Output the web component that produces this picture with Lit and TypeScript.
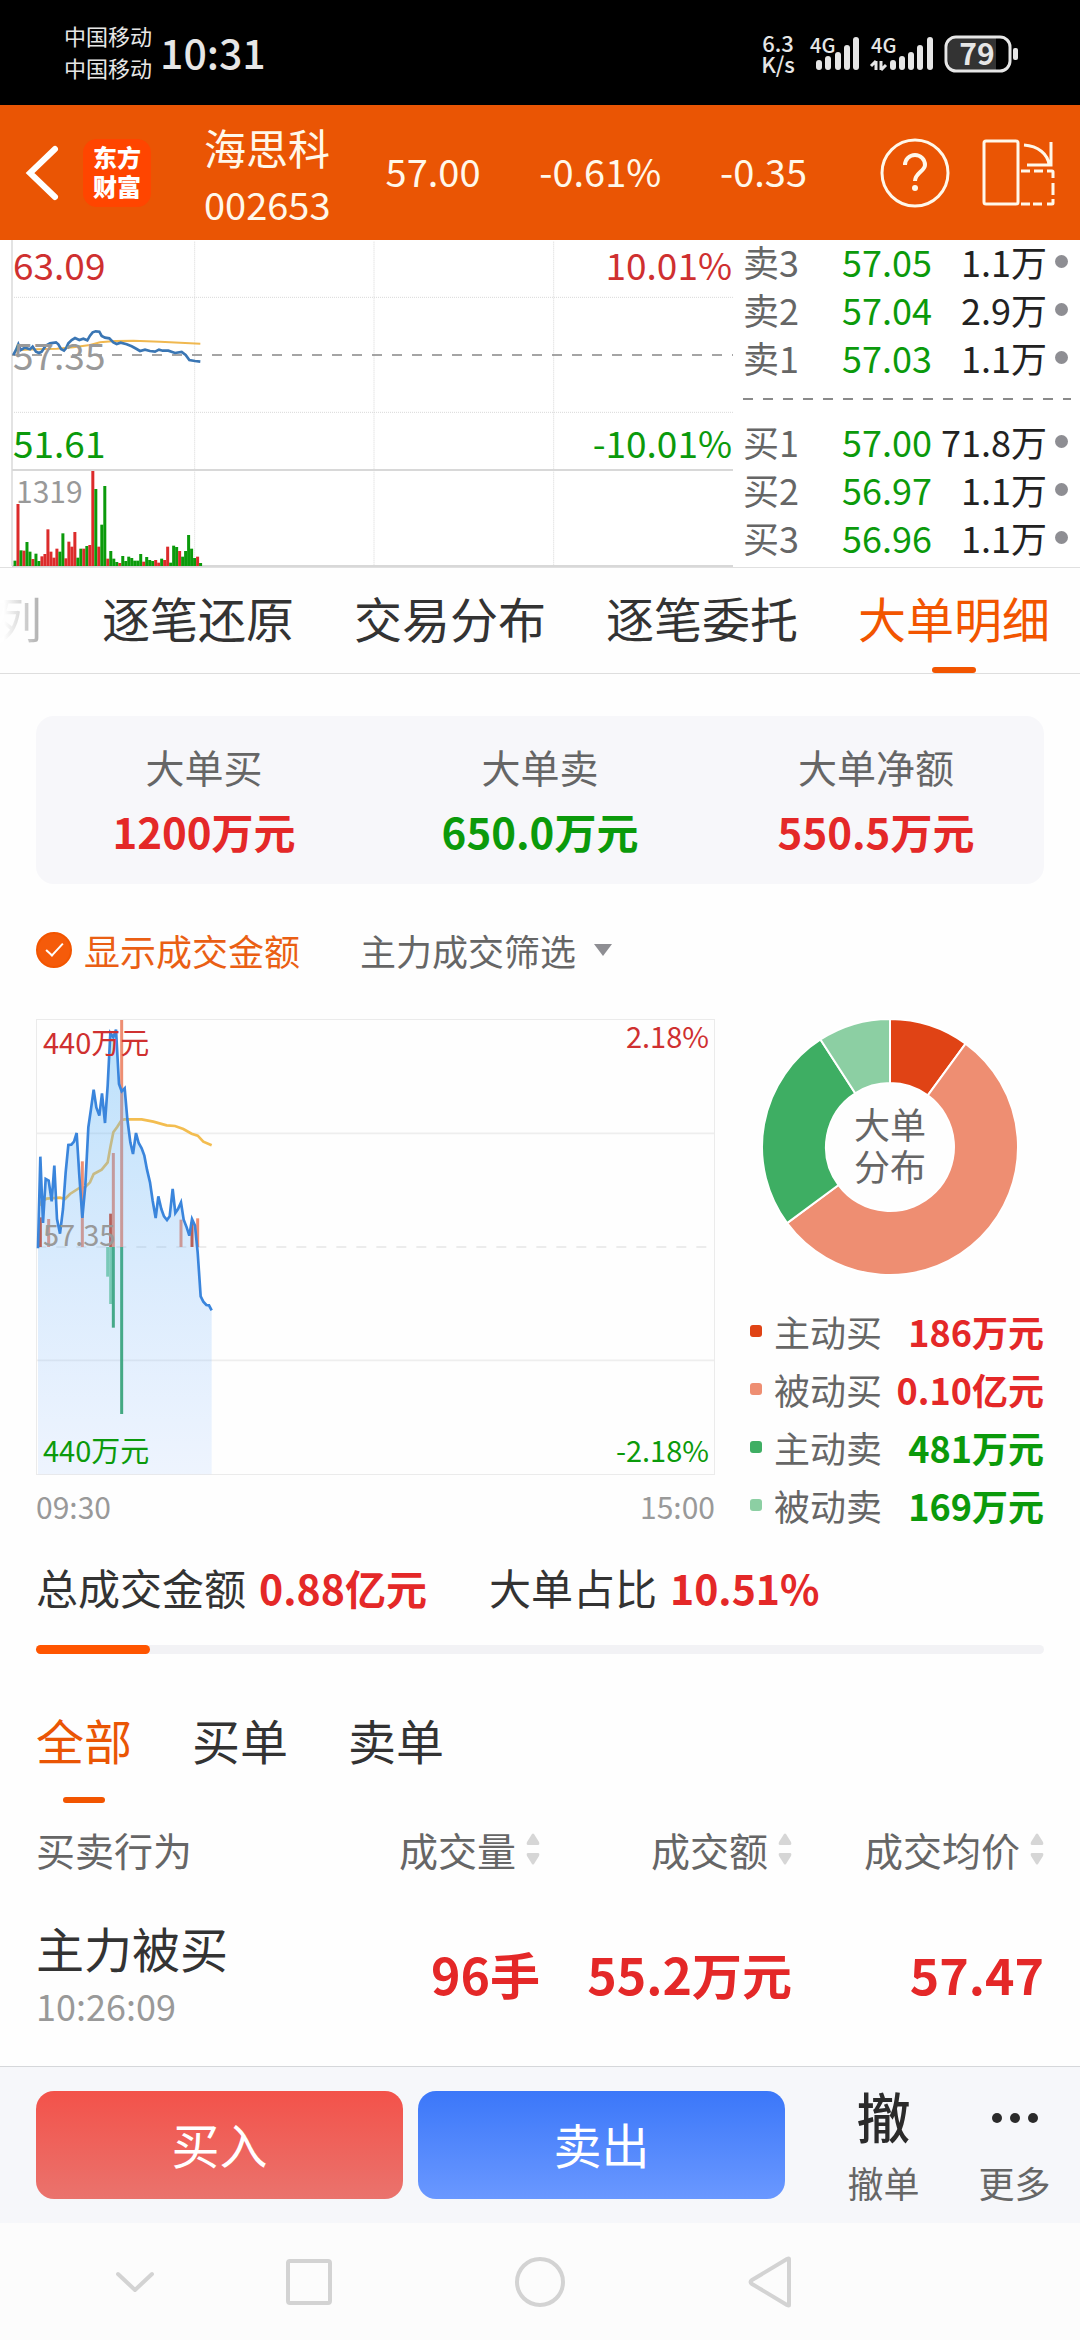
import { LitElement, html, svg, css } from "lit";
import { customElement, state } from "lit/decorators.js";
import { classMap } from "lit/directives/class-map.js";

type Pt = [number, number];
const toPoints = (pts: Pt[]) => pts.map((p) => p.join(",")).join(" ");

const RED = "#dc2b2b";
const GREEN = "#0b9a0b";

/* Intraday price and average lines of the compact chart. */
const MINI_PRICE: Pt[] = [
  [40, 360], [48, 345], [55, 328], [62, 345], [75, 338], [90, 343], [98, 335], [108, 350], [117, 354], [125, 350],
  [137, 332], [150, 325], [168, 322], [175, 328], [183, 342], [192, 347], [198, 340], [205, 325], [215, 315],
  [225, 309], [238, 315], [250, 311], [262, 316], [270, 302], [278, 292], [287, 289], [298, 290], [305, 303],
  [315, 308], [328, 310], [340, 322], [350, 327], [362, 323], [380, 328], [395, 334], [410, 342], [420, 348],
  [435, 344], [450, 348], [465, 350], [477, 344], [488, 347], [505, 347], [525, 354], [545, 351], [557, 360],
  [568, 375], [585, 378], [601, 380],
];
const MINI_AVG: Pt[] = [
  [60, 345], [110, 343], [170, 341], [220, 337], [270, 330], [300, 322], [345, 318], [400, 317], [480, 320],
  [540, 323], [601, 326],
];
/* One entry per minute: positive is a rising bar, negative a falling bar. */
const VOLUME = [
  -16, 186, -47, 46, -72, -43, 21, -37, -15, 29, 36, 110, 43, 25, 52, -43, -98, 23, 73, 58, 102, -25, -52, 52, -60,
  63, 285, -231, 58, -124, -240, 22, -45, -22, -12, 9, -30, -15, -28, -24, -16, -16, -36, 13, -27, -18, -15, 18, 10,
  -22, 18, 58, -10, -61, -57, 45, -28, -45, -93, -52, -24, 28, -9,
];

const PRICE: Pt[] = [
  [114, 718], [121, 443], [129, 642], [137, 510], [146, 515], [155, 577], [163, 470], [171, 630], [180, 674],
  [189, 600], [197, 490], [205, 408], [214, 407], [222, 398], [230, 372], [238, 500], [247, 627], [256, 530],
  [265, 355], [273, 300], [281, 242], [289, 295], [298, 320], [306, 253], [315, 342], [323, 230], [331, 72],
  [340, 85], [348, 62], [357, 225], [365, 247], [374, 238], [382, 330], [391, 400], [399, 435], [408, 372],
  [416, 402], [425, 418], [433, 440], [441, 482], [450, 520], [458, 575], [467, 627], [475, 562], [484, 600],
  [492, 622], [501, 633], [509, 622], [518, 540], [526, 612], [534, 600], [543, 580], [551, 632], [560, 655],
  [568, 680], [576, 630], [585, 650], [593, 730], [602, 862], [610, 878], [619, 888], [627, 889], [635, 904],
];
const AVG: Pt[] = [
  [118, 590], [126, 575], [140, 569], [180, 566], [195, 570], [210, 555], [238, 537], [255, 535], [270, 520],
  [281, 495], [305, 482], [323, 460], [331, 415], [340, 370], [352, 353], [365, 333], [374, 331], [425, 331],
  [460, 338], [500, 349], [525, 351], [550, 360], [575, 374], [593, 380], [610, 398], [635, 409],
];
/* x, end y, colour; every bar starts on the zero line. */
const ORDERS: [number, number, string][] = [
  [121, 625, "#d2401c"], [146, 630, "#ee8e72"], [247, 457, "#ee8e72"], [332, 614, "#d2401c"], [340, 432, "#ee8e72"],
  [365, 33, "#ee8e72"], [543, 632, "#ee8e72"], [576, 640, "#d2401c"], [593, 628, "#ee8e72"],
  [323, 803, "#7ccfa0"], [332, 885, "#7ccfa0"], [340, 956, "#35a566"], [365, 1215, "#35a566"],
];
const ZERO = 714;

const SLICES = [
  { label: "主动买", value: "186万元", up: true, color: "#e04315", from: 0, to: 36.2 },
  { label: "被动买", value: "0.10亿元", up: true, color: "#ee8e72", from: 36.2, to: 233.5 },
  { label: "主动卖", value: "481万元", up: false, color: "#3eae63", from: 233.5, to: 327.1 },
  { label: "被动卖", value: "169万元", up: false, color: "#8ccfa3", from: 327.1, to: 360 },
];

const ring = (from: number, to: number) => {
  const at = (deg: number, r: number) => {
    const a = (deg * Math.PI) / 180;
    return `${(128 + r * Math.sin(a)).toFixed(2)} ${(128 - r * Math.cos(a)).toFixed(2)}`;
  };
  const big = to - from > 180 ? 1 : 0;
  return `M${at(from, 128)}A128 128 0 ${big} 1 ${at(to, 128)}L${at(to, 64)}A64 64 0 ${big} 0 ${at(from, 64)}Z`;
};

const base = css`
  :host {
    display: block;
    font-family: "Noto Sans CJK SC", "Noto Sans", sans-serif;
  }
  * {
    box-sizing: border-box;
  }
  svg {
    display: block;
  }
  button {
    font: inherit;
    color: inherit;
    background: none;
    border: 0;
    padding: 0;
    margin: 0;
  }
  .up {
    color: #e42828;
  }
  .down {
    color: #0b9a0b;
  }
`;

@customElement("status-bar")
class StatusBar extends LitElement {
  static styles = [
    base,
    css`
      .bar {
        display: flex;
        align-items: center;
        justify-content: space-between;
        height: 105px;
        padding: 0 60px 0 64px;
        background: #000;
        color: #e6e6e6;
      }
      .left {
        display: flex;
        align-items: center;
        gap: 8px;
        padding-bottom: 4px;
      }
      .carriers {
        font-size: 22px;
        line-height: 32px;
      }
      .time {
        font-size: 41px;
        line-height: 48px;
        font-weight: 500;
      }
      .net {
        font-family: "Noto Sans CJK SC", sans-serif;
        font-weight: 500;
      }
    `,
  ];
  render() {
    const signal = (xs: number[]) => {
      const tops = [60, 56, 52, 45, 37];
      return xs.map((x, i) => svg`<rect x=${x - 3} y=${tops[i]} width="6" height=${70 - tops[i]} rx="3" />`);
    };
    return html`
      <header class="bar">
        <div class="left">
          <div class="carriers">
            <div>中国移动</div>
            <div>中国移动</div>
          </div>
          <div class="time">10:31</div>
        </div>
        <svg class="net" width="260" height="105" viewBox="760 0 260 105" fill="#e6e6e6" role="img" aria-label="网络与电量">
          <text x="778" y="52" font-size="22" text-anchor="middle">6.3</text>
          <text x="778" y="73" font-size="22" text-anchor="middle">K/s</text>
          <text x="810" y="53" font-size="20">4G</text>
          ${signal([819, 828, 838, 847, 856])}
          <text x="871" y="53" font-size="20">4G</text>
          ${signal([893, 902, 911, 920, 930])}
          <path d="M876 61v9M881 61v9M876 61l-5 5M881 70l5-5" stroke="#e6e6e6" stroke-width="3" fill="none" />
          <path d="M957 38H996V70H957Q948 70 948 60V48Q948 38 957 38Z" fill="#333" />
          <rect x="946" y="37" width="64" height="34" rx="10" fill="none" stroke="#e6e6e6" stroke-width="3" />
          <rect x="1013" y="48" width="5" height="12" rx="2" />
          <text x="977" y="65" font-size="30" font-weight="700" text-anchor="middle">79</text>
        </svg>
      </header>
    `;
  }
}

@customElement("stock-header")
class StockHeader extends LitElement {
  static styles = [
    base,
    css`
      .bar {
        display: flex;
        align-items: center;
        height: 135px;
        padding: 0 24px;
        background: #ea5504;
        color: #fff8ea;
        font-size: 38px;
        line-height: 44px;
      }
      .logo {
        display: grid;
        place-content: center;
        width: 68px;
        height: 68px;
        margin-left: 22px;
        border-radius: 14px;
        background: #ff4500;
        color: #fff;
        font-size: 24px;
        font-weight: 900;
        line-height: 29px;
        padding-bottom: 4px;
      }
      .name {
        margin-left: 53px;
        padding-top: 6px;
      }
      .title {
        font-size: 42px;
        line-height: 56px;
        font-weight: 400;
        margin: 0;
      }
      .code {
        line-height: 58px;
      }
      .figures {
        display: flex;
        flex: 1;
        justify-content: space-between;
        padding: 0 73px 3px 55px;
      }
      .tools {
        display: flex;
        gap: 32px;
      }
    `,
  ];
  render() {
    return html`
      <header class="bar">
        <button aria-label="返回">
          <svg width="37" height="68" viewBox="0 0 37 68">
            <path d="M31 10 6 34 31 58" fill="none" stroke="#fff" stroke-width="6" stroke-linecap="round" stroke-linejoin="miter" />
          </svg>
        </button>
        <div class="logo"><span>东方</span><span>财富</span></div>
        <div class="name">
          <h1 class="title">海思科</h1>
          <div class="code">002653</div>
        </div>
        <div class="figures"><span>57.00</span><span>-0.61%</span><span>-0.35</span></div>
        <div class="tools">
          <button aria-label="帮助">
            <svg width="70" height="72" viewBox="0 0 70 72" fill="none" stroke="#fff8ea" stroke-width="3">
              <circle cx="35" cy="36" r="33" />
              <path d="M25 28a10 10 0 0 1 20 0c0 6-10 8-10 16" stroke-width="4" />
              <circle cx="35" cy="51" r="3" fill="#fff8ea" stroke="none" />
            </svg>
          </button>
          <button aria-label="横屏">
            <svg width="74" height="72" viewBox="0 0 74 72" fill="none" stroke="#fff8ea" stroke-width="3">
              <rect x="2" y="4" width="34" height="63" rx="2" />
              <path d="M42 8c14 1 24 9 25 20M69 5V28H45" />
              <path d="M39 34h9M52 34h9M65 34h5q1 0 1 1v6M71 46v12M71 62v4q0 1-1 1h-5M60 67h-9M48 67h-9" />
            </svg>
          </button>
        </div>
      </header>
    `;
  }
}

@customElement("quote-panel")
class QuotePanel extends LitElement {
  static styles = [
    base,
    css`
      .panel {
        display: grid;
        grid-template-columns: 733fr 347fr;
        border-bottom: 1px solid #e0e0e0;
        background: #fff;
      }
      .chart {
        position: relative;
      }
      .chart svg {
        width: 100%;
        height: auto;
      }
      .tag {
        position: absolute;
        font-size: 37px;
        line-height: 40px;
      }
      .top {
        top: 4px;
      }
      .middle {
        top: 94px;
        color: #999;
      }
      .low {
        top: 182px;
      }
      .start {
        left: 13px;
      }
      .end {
        right: 1px;
      }
      .vol {
        top: 230px;
        left: 16px;
        font-size: 30px;
        color: #999;
      }
      .red {
        color: #cf3030;
      }
      .book {
        display: flex;
        flex-direction: column;
        padding-left: 10px;
      }
      .level {
        display: grid;
        grid-template-columns: 99px 98px 1fr 13px;
        align-items: center;
        height: 48px;
        padding: 0 12px 6px 0;
        font-size: 36px;
        line-height: 42px;
        color: #666;
      }
      .amount {
        color: #222;
        text-align: right;
        white-space: nowrap;
        margin-left: -24px;
        padding-right: 8px;
      }
      .dot {
        width: 13px;
        height: 13px;
        border-radius: 50%;
        background: #8e8e93;
      }
      .split {
        height: 2px;
        margin: 14px 9px 20px 0;
        background: repeating-linear-gradient(90deg, #8a8a8a 0 10px, transparent 10px 20px);
      }
    `,
  ];
  private rows(levels: string[][]) {
    return levels.map(
      ([name, price, amount]) => html`
        <div class="level">
          <span>${name}</span><span class="down">${price}</span><span class="amount">${amount}</span><i class="dot"></i>
        </div>
      `,
    );
  }
  render() {
    return html`
      <section class="panel">
        <div class="chart">
          <svg viewBox="0 15 2199 981" role="img" aria-label="分时走势">
            <g stroke="#c8c8c8" stroke-width="3" stroke-dasharray="3 3">
              <path d="M36 187H2199M36 532H2199M584 20V993M1122 20V993M1661 20V993" opacity=".7" />
            </g>
            <path d="M36 15V993" stroke="#e3e3e3" stroke-width="6" />
            <path d="M36 705H2199M36 993H2199" stroke="#d8d8d8" stroke-width="6" />
            <path d="M36 360H2199" stroke="#888" stroke-width="5" stroke-dasharray="30 30" />
            ${VOLUME.map((v, i) => {
              const h = Math.abs(v);
              return svg`<rect x=${40.5 + i * 8.98} y=${993 - h} width="9" height=${h} fill=${v > 0 ? RED : GREEN} />`;
            })}
            <polyline points=${toPoints(MINI_AVG)} fill="none" stroke="#f0b850" stroke-width="6" />
            <polyline points=${toPoints(MINI_PRICE)} fill="none" stroke="#3a76b4" stroke-width="8" />
          </svg>
          <span class="tag top start red">63.09</span>
          <span class="tag top end red">10.01%</span>
          <span class="tag middle start">57.35</span>
          <span class="tag low start down">51.61</span>
          <span class="tag low end down">-10.01%</span>
          <span class="tag vol">1319</span>
        </div>
        <div class="book">
          <div>${this.rows([["卖3", "57.05", "1.1万"], ["卖2", "57.04", "2.9万"], ["卖1", "57.03", "1.1万"]])}</div>
          <div class="split"></div>
          <div>${this.rows([["买1", "57.00", "71.8万"], ["买2", "56.97", "1.1万"], ["买3", "56.96", "1.1万"]])}</div>
        </div>
      </section>
    `;
  }
}

@customElement("detail-tabs")
class DetailTabs extends LitElement {
  @state() private active = 3;
  static styles = [
    base,
    css`
      .tabs {
        display: flex;
        justify-content: flex-end;
        gap: 60px;
        height: 106px;
        padding-right: 30px;
        border-bottom: 1px solid #dedede;
        overflow: hidden;
      }
      .tab {
        display: flex;
        flex-direction: column;
        align-items: center;
        justify-content: space-between;
        flex: none;
        padding-top: 19px;
        font-size: 48px;
        line-height: 60px;
        color: #333;
      }
      .tab::after {
        content: "";
        width: 44px;
        height: 6px;
        border-radius: 3px;
      }
      .on {
        color: #f25500;
      }
      .on::after {
        background: #f25500;
      }
      .cut {
        color: transparent;
        background: linear-gradient(90deg, #fff 20%, #aaa);
        background-clip: text;
        -webkit-background-clip: text;
      }
    `,
  ];
  render() {
    const names = ["逐笔还原", "交易分布", "逐笔委托", "大单明细"];
    return html`
      <nav class="tabs" role="tablist">
        <button class="tab cut" role="tab">列</button>
        ${names.map(
          (n, i) => html`<button
            class=${classMap({ tab: true, on: i === this.active })}
            role="tab"
            aria-selected=${i === this.active}
            @click=${() => (this.active = i)}
          >
            ${n}
          </button>`,
        )}
      </nav>
    `;
  }
}

@customElement("order-distribution")
class OrderDistribution extends LitElement {
  static styles = [
    base,
    css`
      .split {
        display: grid;
        grid-template-columns: 679fr 294fr;
        gap: 35px;
        margin-top: 49px;
      }
      .plot {
        position: relative;
      }
      .plot svg,
      .pie svg {
        width: 100%;
        height: auto;
      }
      .tag {
        position: absolute;
        font-size: 29px;
        line-height: 32px;
      }
      .start {
        left: 7px;
      }
      .end {
        right: 6px;
      }
      .hi {
        top: 6px;
        color: #cf3030;
      }
      .hi.end {
        top: 0;
      }
      .mid {
        top: 198px;
        color: #999;
      }
      .lo {
        bottom: 10px;
      }
      .times {
        display: flex;
        justify-content: space-between;
        margin-top: 11px;
        font-size: 30px;
        line-height: 40px;
        color: #999;
      }
      .pie {
        position: relative;
        width: 256px;
        margin-left: 12px;
      }
      .hole {
        position: absolute;
        inset: 0;
        display: grid;
        place-content: center;
        padding-bottom: 6px;
        font-size: 36px;
        line-height: 42px;
        color: #666;
      }
      .legend {
        list-style: none;
        margin: 27px 0 0;
        padding: 0;
      }
      .entry {
        display: flex;
        align-items: center;
        height: 58px;
        font-size: 36px;
        line-height: 44px;
        color: #666;
      }
      .mark {
        width: 12px;
        height: 12px;
        margin-right: 12px;
        border-radius: 3px;
      }
      .sum {
        margin-left: auto;
        font-weight: 700;
      }
    `,
  ];
  render() {
    return html`
      <section class="split">
        <div>
          <div class="plot">
            <svg viewBox="108 30 2037 1368" role="img" aria-label="大单走势">
              <defs>
                <linearGradient id="fill" x1="0" y1="62" x2="0" y2="1396" gradientUnits="userSpaceOnUse">
                  <stop offset="0" stop-color="#58b4f5" stop-opacity=".4" />
                  <stop offset="1" stop-color="#8ab8ff" stop-opacity=".14" />
                </linearGradient>
              </defs>
              <path d="M109 373H2143M109 1054H2143" stroke="#eee" stroke-width="5" />
              <path d="M109 714H2143" stroke="#e6e6e6" stroke-width="5" stroke-dasharray="30 30" />
              <rect x="109.5" y="31.5" width="2034" height="1365" fill="none" stroke="#ebebeb" stroke-width="3" />
              <polyline points=${toPoints(AVG)} fill="none" stroke="#f3bd50" stroke-width="8" />
              ${ORDERS.map(
                ([x, y, c]) =>
                  svg`<rect x=${x - 4.5} y=${Math.min(y, ZERO)} width="9" height=${Math.abs(y - ZERO)} fill=${c} />`,
              )}
              <polygon points="114,1396 ${toPoints(PRICE)} 635,1396" fill="url(#fill)" />
              <polyline points=${toPoints(PRICE)} fill="none" stroke="#3a85dc" stroke-width="8" />
            </svg>
            <span class="tag start hi">440万元</span>
            <span class="tag end hi">2.18%</span>
            <span class="tag start mid">57.35</span>
            <span class="tag start lo down">440万元</span>
            <span class="tag end lo down">-2.18%</span>
          </div>
          <div class="times"><span>09:30</span><span>15:00</span></div>
        </div>
        <div>
          <div class="pie">
            <svg viewBox="0 0 256 256" role="img" aria-label="大单分布">
              ${SLICES.map((s) => svg`<path d=${ring(s.from, s.to)} fill=${s.color} stroke="#fff" stroke-width="2" />`)}
            </svg>
            <div class="hole"><span>大单</span><span>分布</span></div>
          </div>
          <ul class="legend">
            ${SLICES.map(
              (s) => html`
                <li class="entry">
                  <i class="mark" style="background:${s.color}"></i>${s.label}
                  <span class=${classMap({ sum: true, up: s.up, down: !s.up })}>${s.value}</span>
                </li>
              `,
            )}
          </ul>
        </div>
      </section>
    `;
  }
}

@customElement("order-list")
class OrderList extends LitElement {
  @state() private tab = 0;
  static styles = [
    base,
    css`
      .tabs {
        display: flex;
        gap: 60px;
        margin-top: 55px;
      }
      .tab {
        display: flex;
        flex-direction: column;
        align-items: center;
        gap: 28px;
        font-size: 48px;
        line-height: 60px;
        color: #333;
      }
      .tab::after {
        content: "";
        width: 42px;
        height: 6px;
        border-radius: 3px;
      }
      .on {
        color: #ea5504;
      }
      .on::after {
        background: #f25500;
      }
      .orders {
        width: 100%;
        margin-top: 21px;
        border-collapse: collapse;
        table-layout: fixed;
      }
      .orders th,
      .orders td {
        padding: 0;
        text-align: right;
        white-space: nowrap;
      }
      .orders th {
        height: 50px;
        font-size: 39px;
        line-height: 50px;
        font-weight: 400;
        color: #666;
      }
      .orders th:first-child,
      .orders td:first-child {
        text-align: left;
      }
      .sort {
        display: inline-flex;
        align-items: center;
        gap: 10px;
      }
      .orders td {
        padding-top: 41px;
      }
      .act {
        font-size: 48px;
        line-height: 64px;
        color: #333;
      }
      .at {
        font-size: 36px;
        line-height: 52px;
        color: #999;
      }
      .num {
        font-size: 50px;
        font-weight: 700;
        line-height: 60px;
      }
    `,
  ];
  render() {
    const col = (name: string) => html`
      <th scope="col">
        <button class="sort">
          ${name}
          <svg width="14" height="34" viewBox="0 0 14 34" fill="#d6d6d6">
            <path d="M6 2Q7 1 8 2L13 10Q14 13 12 13H2Q0 13 1 10ZM6 32Q7 33 8 32L13 24Q14 21 12 21H2Q0 21 1 24Z" />
          </svg>
        </button>
      </th>
    `;
    return html`
      <div class="tabs" role="tablist">
        ${["全部", "买单", "卖单"].map(
          (n, i) => html`<button
            class=${classMap({ tab: true, on: i === this.tab })}
            role="tab"
            aria-selected=${i === this.tab}
            @click=${() => (this.tab = i)}
          >
            ${n}
          </button>`,
        )}
      </div>
      <table class="orders">
        <thead>
          <tr>
            <th scope="col">买卖行为</th>
            ${col("成交量")}${col("成交额")}${col("成交均价")}
          </tr>
        </thead>
        <tbody>
          <tr>
            <td>
              <div class="act">主力被买</div>
              <div class="at">10:26:09</div>
            </td>
            <td class="num up">96手</td>
            <td class="num up">55.2万元</td>
            <td class="num up">57.47</td>
          </tr>
        </tbody>
      </table>
    `;
  }
}

@customElement("trade-bar")
class TradeBar extends LitElement {
  static styles = [
    base,
    css`
      .bar {
        display: flex;
        height: 157px;
        padding: 24px 0 0 36px;
        border-top: 1px solid #d5d7da;
        background: #f6f7fa;
      }
      .deal {
        flex: 367;
        height: 108px;
        margin-right: 15px;
        padding-bottom: 4px;
        border-radius: 18px;
        color: #fff;
        font-size: 48px;
      }
      .buy {
        background: linear-gradient(#f3524a, #ea736d);
      }
      .sell {
        background: linear-gradient(#3b77f9, #6a98ff);
      }
      .tool {
        display: flex;
        flex-direction: column;
        align-items: center;
        width: 131px;
        font-size: 36px;
        line-height: 44px;
        color: #666;
      }
      .glyph {
        display: flex;
        align-items: center;
        height: 70px;
        margin-top: -10px;
        margin-bottom: 9px;
        font-size: 54px;
        line-height: 70px;
        font-weight: 500;
        color: #2b2b2b;
      }
      .dots {
        padding-top: 4px;
      }
      .first {
        margin-left: 18px;
      }
    `,
  ];
  render() {
    return html`
      <footer class="bar">
        <button class="deal buy">买入</button>
        <button class="deal sell">卖出</button>
        <button class="tool first"><span class="glyph">撤</span>撤单</button>
        <button class="tool">
          <span class="glyph dots">
            <svg width="46" height="10" viewBox="0 0 46 10" fill="#2b2b2b">
              <circle cx="5" cy="5" r="5" />
              <circle cx="23" cy="5" r="5" />
              <circle cx="41" cy="5" r="5" />
            </svg> </span
          >更多
        </button>
      </footer>
    `;
  }
}

@customElement("system-nav")
class SystemNav extends LitElement {
  static styles = [
    base,
    css`
      .nav {
        display: grid;
        grid-template-columns: 225fr 190fr 240fr 230fr 195fr;
        align-items: center;
        height: 117px;
        background: #fcfcfc;
      }
      .key {
        display: grid;
        place-content: center;
      }
      .hide {
        padding-left: 45px;
      }
      .recent {
        padding-right: 22px;
      }
      .home {
        padding-left: 10px;
      }
    `,
  ];
  render() {
    const icon = (cls: string, label: string, shape: unknown) => html`
      <button class="key ${cls}" aria-label=${label}>
        <svg width="54" height="54" viewBox="0 0 54 54" fill="none" stroke="#d3d3d3" stroke-width="4" stroke-linejoin="round" stroke-linecap="round">
          ${shape}
        </svg>
      </button>
    `;
    return html`
      <nav class="nav">
        ${icon("hide", "隐藏", svg`<path d="M10 19 27 35 44 19" />`)}
        ${icon("recent", "最近任务", svg`<rect x="6" y="6" width="42" height="42" rx="2" />`)}
        ${icon("home", "主屏幕", svg`<circle cx="27" cy="27" r="23" />`)}
        ${icon("back", "返回", svg`<path d="M46 4V50Q46 51 44 50L9 29Q6 27 9 25L44 4Q46 3 46 4Z" />`)}
      </nav>
    `;
  }
}

@customElement("app-root")
class AppRoot extends LitElement {
  @state() private showAmount = true;
  static styles = [
    base,
    css`
      .page {
        display: flex;
        flex-direction: column;
        min-height: 100vh;
        background: #fefefe;
      }
      .main {
        flex: 1;
        padding: 42px 36px 0;
      }
      .summary {
        display: grid;
        grid-template-columns: repeat(3, 1fr);
        margin: 0;
        padding: 25px 0 23px;
        border-radius: 18px;
        background: #f7f7fa;
        text-align: center;
      }
      .summary dt {
        font-size: 39px;
        line-height: 50px;
        color: #666;
      }
      .summary dd {
        margin: 10px 0 0;
        font-size: 42px;
        line-height: 60px;
        font-weight: 700;
      }
      .filters {
        display: flex;
        align-items: center;
        gap: 60px;
        height: 40px;
        margin-top: 46px;
        font-size: 36px;
        line-height: 40px;
        color: #666;
      }
      .check {
        display: flex;
        align-items: center;
        gap: 12px;
        color: #ea5f14;
      }
      .box {
        appearance: none;
        display: grid;
        place-content: center;
        width: 36px;
        height: 36px;
        margin: 0;
        border: 2px solid #f25500;
        border-radius: 50%;
      }
      .box:checked {
        background: #f55b0a;
      }
      .box:checked::before {
        content: "";
        width: 15px;
        height: 7px;
        margin-bottom: 5px;
        border: solid #fff;
        border-width: 0 0 2px 2px;
        transform: rotate(-47deg);
      }
      .pick {
        display: flex;
        align-items: center;
      }
      .select {
        appearance: none;
        border: 0;
        padding: 0;
        width: 234px;
        height: 52px;
        background: none;
        font: inherit;
        line-height: 52px;
        color: inherit;
      }
      .caret {
        border: 9px solid transparent;
        border-top: 12px solid #8e8e93;
        border-bottom: 0;
      }
      .totals {
        display: flex;
        gap: 62px;
        margin-top: 23px;
        font-size: 42px;
        line-height: 60px;
        color: #333;
      }
      .totals b {
        margin-left: 13px;
        font-size: 41px;
      }
      .track {
        height: 9px;
        margin-top: 28px;
        border-radius: 5px;
        background: #f2f2f5;
      }
      .filled {
        height: 9px;
        border-radius: 5px;
        background: #ff5500;
      }
    `,
  ];
  render() {
    const share = 11.3;
    return html`
      <div class="page">
        <status-bar></status-bar>
        <stock-header></stock-header>
        <quote-panel></quote-panel>
        <detail-tabs></detail-tabs>
        <main class="main">
          <dl class="summary">
            <div><dt>大单买</dt><dd class="up">1200万元</dd></div>
            <div><dt>大单卖</dt><dd class="down">650.0万元</dd></div>
            <div><dt>大单净额</dt><dd class="up">550.5万元</dd></div>
          </dl>
          <div class="filters">
            <label class="check">
              <input
                class="box"
                type="checkbox"
                .checked=${this.showAmount}
                @change=${(e: Event) => (this.showAmount = (e.target as HTMLInputElement).checked)}
              />显示成交金额
            </label>
            <div class="pick">
              <select class="select" aria-label="主力成交筛选">
                <option>主力成交筛选</option>
              </select>
              <i class="caret"></i>
            </div>
          </div>
          <order-distribution></order-distribution>
          <div class="totals">
            <span>总成交金额<b class="up">0.88亿元</b></span>
            <span>大单占比<b class="up">10.51%</b></span>
          </div>
          <div class="track" role="progressbar" aria-label="大单占比" aria-valuenow="10.51">
            <div class="filled" style="width:${share}%"></div>
          </div>
          <order-list></order-list>
        </main>
        <trade-bar></trade-bar>
        <system-nav></system-nav>
      </div>
    `;
  }
}
